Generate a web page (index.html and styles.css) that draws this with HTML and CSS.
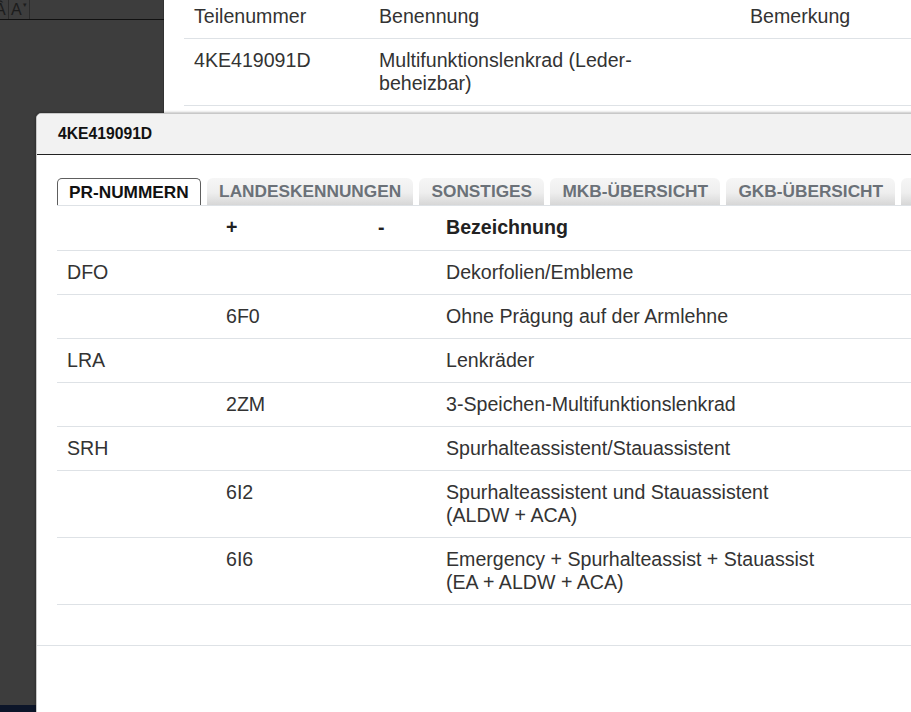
FILE: index.html
```html
<!DOCTYPE html>
<html lang="de">
<head>
<meta charset="utf-8">
<title>4KE419091D</title>
<link rel="stylesheet" href="styles.css">
</head>
<body>
<div class="app">
  <aside class="sidebar">
    <div class="toolbar">
      <span class="tool tool-cut">Â</span>
      <span class="tool">A<span class="caret">▾</span></span>
    </div>
    <div class="sidebar-fill"></div>
    <div class="sidebar-bottom"></div>
  </aside>
  <main class="main">
    <table class="parts">
      <colgroup><col class="p1"><col class="p2"><col class="p3"></colgroup>
      <thead>
        <tr><th>Teilenummer</th><th>Benennung</th><th>Bemerkung</th></tr>
      </thead>
      <tbody>
        <tr><td>4KE419091D</td><td>Multifunktionslenkrad (Leder-<br>beheizbar)</td><td></td></tr>
      </tbody>
    </table>
  </main>
</div>

<div class="modal">
  <div class="modal-header">4KE419091D</div>
  <div class="modal-body">
    <div class="tabs">
      <span class="tab active">PR-NUMMERN</span>
      <span class="tab">LANDESKENNUNGEN</span>
      <span class="tab">SONSTIGES</span>
      <span class="tab">MKB-ÜBERSICHT</span>
      <span class="tab">GKB-ÜBERSICHT</span>
      <span class="tab">TEILE</span>
    </div>
    <table class="pr">
      <colgroup><col class="c1"><col class="c2"><col class="c3"><col class="c4"></colgroup>
      <thead>
        <tr><th></th><th>+</th><th>-</th><th>Bezeichnung</th></tr>
      </thead>
      <tbody>
        <tr><td>DFO</td><td></td><td></td><td>Dekorfolien/Embleme</td></tr>
        <tr><td></td><td>6F0</td><td></td><td>Ohne Prägung auf der Armlehne</td></tr>
        <tr><td>LRA</td><td></td><td></td><td>Lenkräder</td></tr>
        <tr><td></td><td>2ZM</td><td></td><td>3-Speichen-Multifunktionslenkrad</td></tr>
        <tr><td>SRH</td><td></td><td></td><td>Spurhalteassistent/Stauassistent</td></tr>
        <tr><td></td><td>6I2</td><td></td><td>Spurhalteassistent und Stauassistent<br>(ALDW + ACA)</td></tr>
        <tr><td></td><td>6I6</td><td></td><td>Emergency + Spurhalteassist + Stauassist<br>(EA + ALDW + ACA)</td></tr>
      </tbody>
    </table>
  </div>
  <div class="modal-footer"></div>
</div>
</body>
</html>
```
FILE: styles.css
```css
html, body {
  margin: 0;
  padding: 0;
  width: 911px;
  height: 712px;
  overflow: hidden;
  background: #ffffff;
  font-family: "Liberation Sans", Arial, sans-serif;
  color: #333333;
}

.app {
  display: flex;
  height: 712px;
}

.sidebar {
  width: 164px;
  flex: none;
  background: #3d3d3d;
  display: flex;
  flex-direction: column;
  box-shadow: inset -1px 0 0 #333333;
}

.toolbar {
  height: 19px;
  border-bottom: 1px solid #111111;
  display: flex;
  align-items: stretch;
}

.tool {
  width: 21px;
  border-right: 1px solid #2b2b2b;
  color: #1c1c1c;
  font-size: 16px;
  line-height: 20px;
  padding-left: 2px;
  position: relative;
  box-sizing: border-box;
}

.tool-cut {
  width: 9px;
  padding-left: 0;
  overflow: hidden;
  text-indent: -5px;
}

.caret {
  font-size: 7px;
  position: absolute;
  top: -5px;
  left: 14px;
}

.sidebar-fill {
  flex: 1;
}

.sidebar-bottom {
  height: 7px;
  background: #0c1529;
}

.main {
  flex: 1;
  padding-left: 20px;
  overflow: hidden;
}

.parts {
  border-collapse: collapse;
  width: 100%;
  font-size: 19.6px;
  line-height: 23px;
}

.parts .p1 { width: 185px; }
.parts .p2 { width: 371px; }

.parts th,
.parts td {
  text-align: left;
  font-weight: normal;
  vertical-align: top;
  padding: 10px 10px;
  border-bottom: 1px solid #dee2e6;
}

.parts th {
  padding-top: 5px;
}

/* Modal */
.modal {
  position: absolute;
  left: 36px;
  top: 113px;
  width: 1100px;
  height: 640px;
  background: #ffffff;
  border: 1px solid #c8c8c8;
  border-radius: 5px 5px 0 0;
  box-shadow: 0 0 3px rgba(0, 0, 0, 0.45);
  display: flex;
  flex-direction: column;
}

.modal-header {
  height: 40px;
  background: #f2f2f2;
  border-bottom: 1px solid #222222;
  border-radius: 5px 5px 0 0;
  padding-left: 21px;
  display: flex;
  align-items: center;
  font-size: 15.7px;
  font-weight: bold;
  color: #111111;
}

.modal-body {
  padding: 23px 0 40px 20px;
}

.tabs {
  display: flex;
  gap: 6.3px;
  height: 27px;
}

.tab {
  height: 27px;
  box-sizing: border-box;
  padding: 0 12px;
  display: flex;
  align-items: center;
  font-size: 17.25px;
  font-weight: bold;
  color: #6b7178;
  white-space: nowrap;
  border-radius: 6px 6px 0 0;
  background: linear-gradient(#f6f6f6 0%, #eeeeee 55%, #d7d7d7 100%);
}

.tab.active {
  background: #ffffff;
  color: #111111;
  border: 1px solid #5e5e5e;
  border-bottom: none;
  padding: 0 11px;
  border-radius: 5px 5px 0 0;
}

.pr {
  border-collapse: collapse;
  width: 100%;
  font-size: 19.6px;
  line-height: 23px;
  border-top: 1px solid #dee2e6;
}

.pr .c1 { width: 159px; }
.pr .c2 { width: 152px; }
.pr .c3 { width: 68px; }

.pr th,
.pr td {
  text-align: left;
  vertical-align: top;
  padding: 10px 10px;
  border-bottom: 1px solid #dee2e6;
}

.pr th {
  font-weight: bold;
  color: #222222;
  padding-bottom: 11px;
}

.modal-footer {
  flex: 1;
  border-top: 1px solid #dee2e6;
}
```
